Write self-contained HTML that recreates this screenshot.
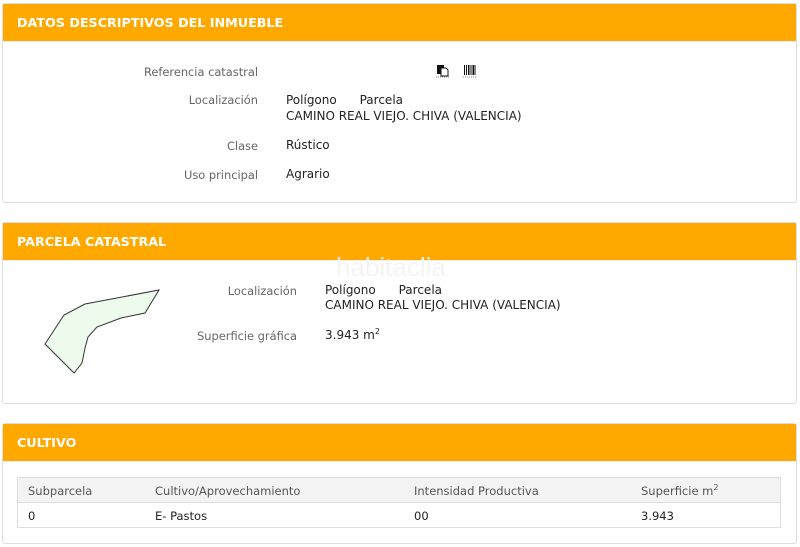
<!DOCTYPE html>
<html><head><meta charset="utf-8"><style>
body{margin:0;background:#fff;font-family:"DejaVu Sans","Liberation Sans",sans-serif;font-size:12px;color:#222;width:800px;height:547px;position:relative;overflow:hidden}
.panel{position:absolute;left:2px;width:793px;border:1px solid #ddd;border-radius:3px;background:#fff}
.hd{background:#ffa800;color:#fff;font-weight:bold;font-size:12.7px;height:37px;line-height:37px;padding-left:14px;border-bottom:1px solid #eee}
.t{position:absolute;white-space:nowrap}
.l{color:#666;text-align:right;font-size:11.4px}
sup{font-size:8px;line-height:0;vertical-align:0;position:relative;top:-5px}
.th{color:#555;font-size:11.5px}
</style></head><body>
<div class="panel" style="top:3px;height:198px"><div class="hd">DATOS DESCRIPTIVOS DEL INMUEBLE</div></div>
<div class="t l" style="right:542px;top:65px">Referencia catastral</div>
<svg class="t" style="left:436px;top:64px" width="14" height="14"><rect x="1" y="1" width="7" height="9" fill="#111"/><path d="M5 4h5l2 2v6H5z" fill="#fff" stroke="#111"/><path d="M0 13h13" stroke="#888" stroke-dasharray="1 1"/></svg>
<svg class="t" style="left:463px;top:64px" width="14" height="14"><path d="M1.5 1v10M3.5 1v10M5.5 1v10M7 1v10M9 1v10M10.5 1v10M12 1v10" stroke="#111" stroke-width="1"/><path d="M0 13h13" stroke="#888" stroke-dasharray="1 1"/></svg>
<div class="t l" style="right:542px;top:93px">Localización</div>
<div class="t" style="left:286px;top:93px">Polígono &nbsp;&nbsp;&nbsp;&nbsp;&nbsp;Parcela</div>
<div class="t" style="left:286px;top:109px">CAMINO REAL VIEJO. CHIVA (VALENCIA)</div>
<div class="t l" style="right:542px;top:139px">Clase</div>
<div class="t" style="left:286px;top:138px">Rústico</div>
<div class="t l" style="right:542px;top:168px">Uso principal</div>
<div class="t" style="left:286px;top:167px">Agrario</div>

<div class="panel" style="top:222px;height:180px"><div class="hd">PARCELA CATASTRAL</div></div>
<svg class="t" style="left:0;top:260px" width="200" height="130"><polygon points="159,30 145,53 121,58 97,67 88,77 85,88 82,103 74,113 45,84 64,55 85,44" fill="#ecfbec" stroke="#333" stroke-width="1"/></svg>
<div class="t" style="left:336px;top:252px;font-size:26px;color:#f4f4f4;font-family:'Liberation Sans',sans-serif">habitaclia</div>
<div class="t l" style="right:503px;top:284px">Localización</div>
<div class="t" style="left:325px;top:283px">Polígono &nbsp;&nbsp;&nbsp;&nbsp;&nbsp;Parcela</div>
<div class="t" style="left:325px;top:298px">CAMINO REAL VIEJO. CHIVA (VALENCIA)</div>
<div class="t l" style="right:503px;top:329px">Superficie gráfica</div>
<div class="t" style="left:325px;top:328px">3.943 m<sup>2</sup></div>

<div class="panel" style="top:423px;height:119px"><div class="hd">CULTIVO</div></div>
<div class="t" style="left:17px;top:477px;width:762px;height:49px;border:1px solid #ddd">
<div style="height:24px;background:#f3f3f3;border-bottom:1px solid #ddd"></div></div>
<div class="t th" style="left:28px;top:484px">Subparcela</div>
<div class="t th" style="left:155px;top:484px">Cultivo/Aprovechamiento</div>
<div class="t th" style="left:414px;top:484px">Intensidad Productiva</div>
<div class="t th" style="left:641px;top:484px">Superficie m<sup>2</sup></div>
<div class="t th" style="left:28px;top:509px;color:#222">0</div>
<div class="t th" style="left:155px;top:509px;color:#222">E- Pastos</div>
<div class="t th" style="left:414px;top:509px;color:#222">00</div>
<div class="t th" style="left:641px;top:509px;color:#222">3.943</div>
</body></html>
